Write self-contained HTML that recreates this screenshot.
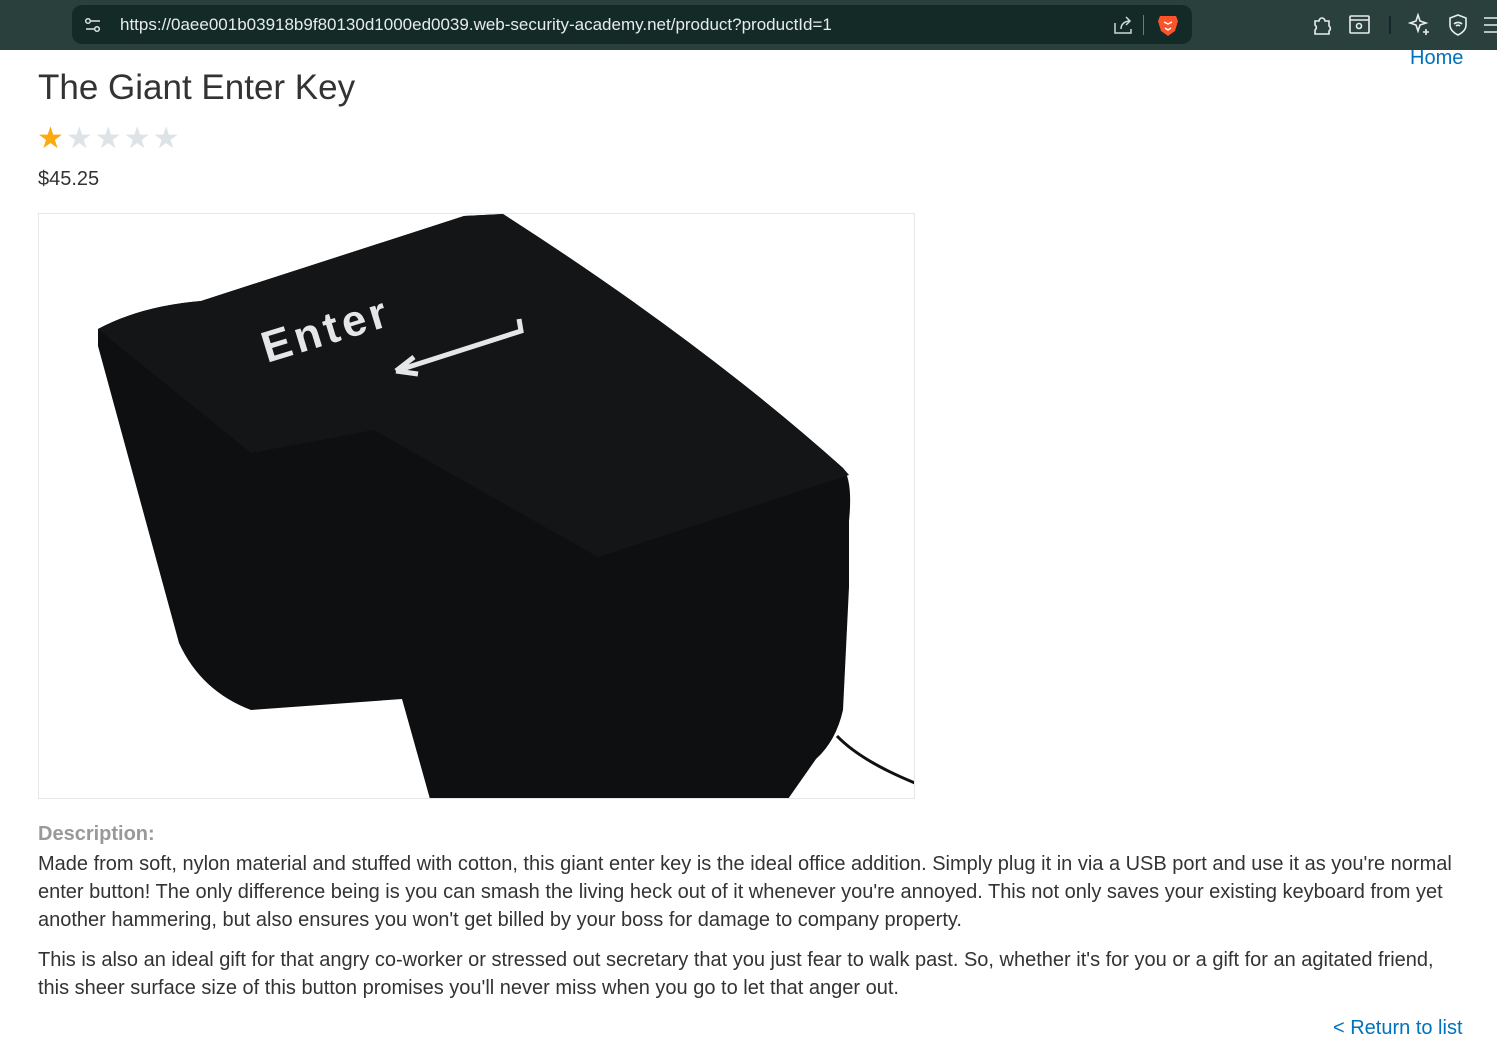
<!DOCTYPE html>
<html><head><meta charset="utf-8"><style>
body{margin:0;width:1497px;height:1062px;background:#fff;font-family:"Liberation Sans",Arial,sans-serif;color:#333;position:relative;overflow:hidden}
.bar{position:absolute;left:0;top:0;width:1497px;height:50px;background:#2a403d}
.url{position:absolute;left:72px;top:5px;width:1120px;height:39px;background:#132a27;border-radius:10px}
.url span{position:absolute;left:48px;top:10px;color:#e6ecea;font-size:17px}
a{color:#0071bc;text-decoration:none}
</style></head><body>
<div class="bar"><div class="url"><svg style="position:absolute;left:12px;top:12px" width="18" height="16" viewBox="0 0 18 16" fill="none" stroke="#dfe6e4" stroke-width="1.5"><circle cx="4" cy="4" r="2.3"/><line x1="7" y1="4" x2="16" y2="4"/><circle cx="13" cy="12" r="2.3"/><line x1="2" y1="12" x2="10" y2="12"/></svg><span>https://0aee001b03918b9f80130d1000ed0039.web-security-academy.net/product?productId=1</span>
<svg style="position:absolute;left:1040px;top:10px" width="22" height="20" fill="none" stroke="#cfd8d5" stroke-width="1.5"><path d="M3 8v10h16v-4M9 14c0-5 4-8 9-8M14 2l4 4-4 4"/></svg>
<div style="position:absolute;left:1071px;top:10px;width:1px;height:20px;background:#6a7c78"></div>
<svg style="position:absolute;left:1085px;top:8px" width="22" height="24"><path d="M3 3h16l2 5-3 10-7 5-7-5-3-10z" fill="#fb542b"/><path d="M7 9l4 2 4-2M8 15l3 2 3-2" stroke="#fff" stroke-width="1.5" fill="none"/></svg></div>
<svg style="position:absolute;left:1312px;top:14px" width="22" height="22" fill="none" stroke="#e8eeec" stroke-width="1.6"><path d="M3 7h4a3 3 0 016 0h4v5a3 3 0 010 5v3H3v-4a3 3 0 000-5z"/></svg>
<svg style="position:absolute;left:1349px;top:15px" width="22" height="20" fill="none" stroke="#e8eeec" stroke-width="1.6"><rect x="1" y="1" width="19" height="17" rx="1"/><line x1="1" y1="5" x2="20" y2="5"/><circle cx="10" cy="11" r="2.5"/></svg>
<div style="position:absolute;left:1389px;top:16px;width:2px;height:18px;background:#14262a"></div>
<svg style="position:absolute;left:1408px;top:13px" width="24" height="24" fill="none" stroke="#e8eeec" stroke-width="1.6"><path d="M10 2l2 6 6 2-6 2-2 6-2-6-6-2 6-2z"/><path d="M18 16v6M15 19h6"/></svg>
<svg style="position:absolute;left:1447px;top:13px" width="22" height="24" fill="none" stroke="#e8eeec" stroke-width="1.6"><path d="M11 2l8 3v7c0 5-4 8-8 10-4-2-8-5-8-10V5z"/><path d="M7 11a6 6 0 018 0M9 13a3 3 0 014 0"/></svg>
<svg style="position:absolute;left:1484px;top:16px" width="13" height="18" stroke="#e8eeec" stroke-width="1.6"><path d="M0 2h13M0 9h13M0 16h13"/></svg>
</div>
<a href="#" style="position:absolute;left:1410px;top:47px;font-size:20px">Home</a>
<div style="position:absolute;left:38px;top:68px;font-size:35px;color:#333">The Giant Enter Key</div>
<div style="position:absolute;left:37px;top:122px;font-size:30px;letter-spacing:2px;line-height:34px"><span style="color:#fcaa0f">★</span><span style="color:#dde3e6">★★★★</span></div>
<div style="position:absolute;left:38px;top:168px;font-size:20px">$45.25</div>
<div style="position:absolute;left:38px;top:213px;width:875px;height:584px;border:1px solid #e6e6e6;overflow:hidden">
<svg width="877" height="586" viewBox="38 213 877 586">
<path d="M97,328 Q140,305 200,300 L463,215 L502,213 Q700,340 842,467 Q852,480 848,520 L848,586 L842,709 Q835,740 815,758 L787,798 L429,798 L401,698 L250,709 Q200,690 178,642 L97,345 Z" fill="#0e0f11"/>
<path d="M97,328 Q140,305 200,300 L463,215 L502,213 Q700,340 842,467 L848,474 L597,556 L373,429 L250,452 Z" fill="#141517"/>
<path d="M836,735 Q860,760 914,782" stroke="#111" stroke-width="3" fill="none"/>
<text x="266" y="362" transform="rotate(-17 266 362)" font-family="Liberation Sans" font-weight="bold" font-size="44" fill="#e6e6e6" letter-spacing="4">Enter</text>
<path d="M518,318 L520,330 L395,370 M395,370 l18,-14 M395,370 l22,3" stroke="#e6e6e6" stroke-width="5" fill="none"/>
</svg></div>
<div style="position:absolute;left:38px;top:823px;font-size:20px;font-weight:bold;color:#999">Description:</div>
<div style="position:absolute;left:38px;top:850px;width:1430px;font-size:20px;line-height:28px">
<p style="margin:0 0 12px">Made from soft, nylon material and stuffed with cotton, this giant enter key is the ideal office addition. Simply plug it in via a USB port and use it as you're normal enter button! The only difference being is you can smash the living heck out of it whenever you're annoyed. This not only saves your existing keyboard from yet another hammering, but also ensures you won't get billed by your boss for damage to company property.</p>
<p style="margin:0">This is also an ideal gift for that angry co-worker or stressed out secretary that you just fear to walk past. So, whether it's for you or a gift for an agitated friend, this sheer surface size of this button promises you'll never miss when you go to let that anger out.</p></div>
<a href="#" style="position:absolute;left:1333px;top:1017px;font-size:20px">&lt; Return to list</a>
</body></html>
